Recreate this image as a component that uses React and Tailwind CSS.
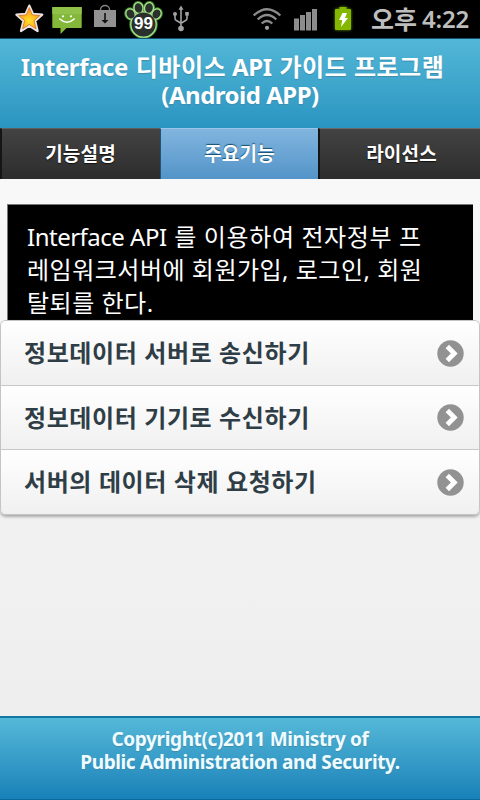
import React from "react";

const korean = "font-['Noto_Sans','Noto_Sans_CJK_KR',sans-serif]";

function StarIcon() {
  return (
    <svg className="h-[32px] w-[32px] shrink-0" viewBox="0 0 32 32">
      <defs>
        <radialGradient id="star" cx="50%" cy="60%" r="55%">
          <stop offset="0" stopColor="#ffe32b" />
          <stop offset="1" stopColor="#ff8b10" />
        </radialGradient>
      </defs>
      <path
        d="M16.3 3.6 20 12l9.2.7-7 6.300 2.400 10-8.300-5.300-8.300 5.300 2.400-10-7-6.300 9.200-.7z"
        fill="url(#star)"
        stroke="#e9e4e2"
        strokeWidth="2.3"
        strokeLinejoin="round"
      />
      <path d="M16.3 5.6 19.200 12.900l7.600.700-5.800 5 2 8.200-6.700-4.300-6.700 4.300 2-8.200-5.800-5 7.600-.700z" fill="none" stroke="#d9690c" strokeWidth=".8" />
    </svg>
  );
}

function MessageIcon() {
  return (
    <svg className="h-[30px] w-[30px] shrink-0" viewBox="0 0 30 30">
      <path d="M1 1h28a.7.7 0 0 1 .7.7v19.6a.7.7 0 0 1-.7.7H14.500L8.500 28V22H1a.7.7 0 0 1-.7-.7V1.700A.7.7 0 0 1 1 1z" fill="#83b83a" />
      <path d="M.3 1h29.400v7H.3z" fill="#90c148" />
      <path d="M7.800 13q7.200 6.500 14.400 0" fill="none" stroke="#fff" strokeWidth="1.600" strokeLinecap="round" />
      <circle cx="11" cy="10.300" r="1.100" fill="#fff" />
      <circle cx="19" cy="10.300" r="1.100" fill="#fff" />
    </svg>
  );
}

function DownloadBagIcon() {
  return (
    <svg className="h-[24px] w-[24px] shrink-0" viewBox="0 0 24 24">
      <path d="M7.500 6V5.500a4.500 4 0 0 1 9 0V6" fill="none" stroke="#858585" strokeWidth="1.300" />
      <path d="M1 6h22v17H1z" fill="#929292" />
      <path d="M11.200 9h1.600v7h2.700L12 19.500 8.500 16h2.700z" fill="#111" />
    </svg>
  );
}

function PawShape() {
  return (
    <>
      <ellipse cx="7.500" cy="14" rx="3.800" ry="4.600" transform="rotate(-30 7.500 14)" />
      <ellipse cx="15.500" cy="8" rx="3.800" ry="4.800" transform="rotate(-10 15.500 8)" />
      <ellipse cx="26" cy="8" rx="3.800" ry="4.800" transform="rotate(12 26 8)" />
      <ellipse cx="33.500" cy="14" rx="3.800" ry="4.600" transform="rotate(32 33.500 14)" />
      <circle cx="20.500" cy="24.500" r="12" />
    </>
  );
}

function PawIcon() {
  return (
    <svg className="h-[38px] w-[40px] shrink-0" viewBox="0 0 40 38">
      <g stroke="#3f8a2c" strokeWidth="4.500"><PawShape /></g>
      <g stroke="#a9e08c" strokeWidth="2.600"><PawShape /></g>
      <g fill="#2a302b"><PawShape /></g>
      <text x="20.500" y="29" textAnchor="middle" fill="#fff" fontSize="17" fontWeight="700" fontFamily="Liberation Sans, sans-serif">99</text>
    </svg>
  );
}

function UsbIcon() {
  return (
    <svg className="h-[28px] w-[18px] shrink-0" viewBox="0 0 18 28">
      <g fill="none" stroke="#a2a2a2" strokeWidth="1.600">
        <path d="M9 4v19M3 10v3.500q0 1.500 1.500 2l4.500 2.700M15 9.500v4q0 1.500-1.500 2L9 18.200" />
      </g>
      <path d="m9 .5 2.500 4.300h-5z" fill="#a2a2a2" />
      <circle cx="9" cy="23.500" r="2.800" fill="#a2a2a2" />
      <circle cx="3" cy="9" r="2" fill="#a2a2a2" />
      <path d="M13.200 7h3.600v3.600h-3.600z" fill="#a2a2a2" />
    </svg>
  );
}

function WifiIcon() {
  return (
    <svg className="h-[24px] w-[30px] shrink-0" viewBox="0 0 30 24">
      <g fill="none" stroke="#8c8c8c" strokeWidth="2.300">
        <path d="M.700 8.500Q14-4 27.300 8.500" />
        <path d="M4.700 12.500q9.300-9 18.600 0" />
        <path d="M8.700 16.500q5.300-5 10.600 0" />
      </g>
      <circle cx="14" cy="20.800" r="2.100" fill="#a0a0a0" />
    </svg>
  );
}

function SignalIcon() {
  return (
    <svg className="h-[22px] w-[24px] shrink-0" viewBox="0 0 24 22">
      <path d="M0 9.500h5v12H0zM6 6h5v15.500H6zM12 3h5v18.500h-5zM18 0h5v21.500h-5z" fill="#8c8c8c" />
    </svg>
  );
}

function BatteryIcon() {
  return (
    <svg className="h-[24px] w-[18px] shrink-0 drop-shadow-[0_0_1.5px_#6a9a00]" viewBox="0 0 18 24">
      <path d="M5.500 0h7v2H16a1 1 0 0 1 1 1v19a1 1 0 0 1-1 1H2a1 1 0 0 1-1-1V3a1 1 0 0 1 1-1h3.500z" fill="#84b800" />
      <path d="M8.500 6H13l-2 5h3l-7 9 1.200-7H5z" fill="#fff" />
    </svg>
  );
}

function StatusBar() {
  return (
    <div className="flex h-[38px] shrink-0 items-start bg-black">
      <div className="flex w-[253px] items-start">
        <div className="ml-[13px] mt-[2px]"><StarIcon /></div>
        <div className="ml-[7px] mt-[6px]"><MessageIcon /></div>
        <div className="ml-[11px] mt-[4px]"><DownloadBagIcon /></div>
        <div className="ml-[6px]"><PawIcon /></div>
        <div className="ml-[9px] mt-[5px]"><UsbIcon /></div>
      </div>
      <div className="mt-[7px]"><WifiIcon /></div>
      <div className="ml-[11px] mt-[9px]"><SignalIcon /></div>
      <div className="ml-[16px] mt-[7px]"><BatteryIcon /></div>
      <div className="ml-[19px] flex whitespace-nowrap text-[24px] leading-[38px] text-[#bdbdbd]">
        <span className="text-[25px] font-bold">오후</span>
        <span className="ml-[5px] font-semibold tracking-[-0.2px]">4:22</span>
      </div>
    </div>
  );
}

function Header() {
  return (
    <header className="flex h-[90px] shrink-0 flex-col items-center border-t border-[#145374] bg-gradient-to-b from-[#52b7d7] to-[#2a95c1] pt-[14px] text-[24px] font-bold leading-[28px] text-white [text-shadow:0_1px_1px_#3e8cab]">
      <div className="mr-[15px] whitespace-nowrap tracking-[0.5px]">
        <span className="mr-[2px] tracking-[-0.4px]">Interface </span>디바이스<span className="mr-[2px] tracking-[-0.4px]"> API </span>가이드 프로그램
      </div>
      <div className="whitespace-nowrap tracking-[-0.5px]">(Android APP)</div>
    </header>
  );
}

const tabs = [
  { label: "기능설명", look: "w-[160px] border-l-2 border-l-[#151515] border-t-[#5e5e5e] bg-gradient-to-b from-[#434343] to-[#2d2d2d] pr-[1px] [text-shadow:0_1px_1px_#111]" },
  { label: "주요기능", look: "w-[158px] border-l border-l-[#225377] border-t-[#9bc5e8] bg-gradient-to-b from-[#81b5df] to-[#5394c8] [text-shadow:0_-1px_1px_#145072]" },
  { label: "라이선스", look: "w-[162px] border-l-2 border-l-[#151515] border-t-[#6a6a6a] bg-gradient-to-b from-[#434343] to-[#2d2d2d] pl-[3px] [text-shadow:0_1px_1px_#111]" },
];

function Tabs() {
  return (
    <nav className="flex h-[51px] shrink-0">
      {tabs.map((t) => (
        <div key={t.label} className={"flex items-center justify-center border-t text-[19px] font-bold leading-none tracking-[0.2px] text-white " + t.look}>
          {t.label}
        </div>
      ))}
    </nav>
  );
}

function Chevron() {
  return (
    <svg className="h-[27px] w-[27px]" viewBox="0 0 27 27">
      <circle cx="13.500" cy="13.500" r="13.200" fill="#929292" />
      <path d="m10.300 6.500 7 7-7 7" fill="none" stroke="#fff" strokeWidth="4.800" />
    </svg>
  );
}

const items = ["정보데이터 서버로 송신하기", "정보데이터 기기로 수신하기", "서버의 데이터 삭제 요청하기"];

export default function App() {
  return (
    <div className={"flex h-[800px] w-[480px] flex-col overflow-hidden " + korean}>
      <StatusBar />
      <Header />
      <Tabs />
      <main className="flex-1 bg-gradient-to-b from-[#f8f8f8] to-[#eeeeee] pt-[25px]">
        <div className="ml-[7px] mr-[7px] h-[116px] whitespace-nowrap border-l border-t border-[#777] bg-black pl-[19px] pt-[15px] text-[24px] leading-[33px] tracking-[0.5px] text-white">
          <div className="tracking-[0.6px]"><span className="mr-[2px] tracking-[-0.5px]">Interface API </span>를 이용하여 전자정부 프</div>
          <div>레임워크서버에 회원가입, 로그인, 회원</div>
          <div>탈퇴를 한다.</div>
        </div>
        <ul className="rounded-[6px] border border-[#c4c4c4] shadow-[0_2px_3px_#aaa]">
          {items.map((item) => (
            <li
              key={item}
              className="flex h-[64px] items-center justify-between border-[#c8c8c8] bg-gradient-to-b from-white to-[#f0f0f0] pl-[23px] pr-[15px] text-[24px] font-bold tracking-[0.6px] text-[#2f3e46] first:rounded-t-[5px] last:h-[65px] last:rounded-b-[5px] [&:not(:first-child)]:border-t"
            >
              <span className="whitespace-nowrap">{item}</span>
              <Chevron />
            </li>
          ))}
        </ul>
      </main>
      <footer className="flex h-[84px] shrink-0 flex-col items-center border-b border-t-2 border-b-[#0d6a9d] border-t-[#1177a3] bg-gradient-to-b from-[#54b9d8] to-[#1781b8] pt-[10px] text-[19px] font-bold leading-[23px] tracking-[-0.37px] text-[#f0fbff] [text-shadow:0_1px_1px_#3e8cab]">
        <div className="whitespace-nowrap">Copyright(c)2011 Ministry of</div>
        <div className="whitespace-nowrap">Public Administration and Security.</div>
      </footer>
    </div>
  );
}
